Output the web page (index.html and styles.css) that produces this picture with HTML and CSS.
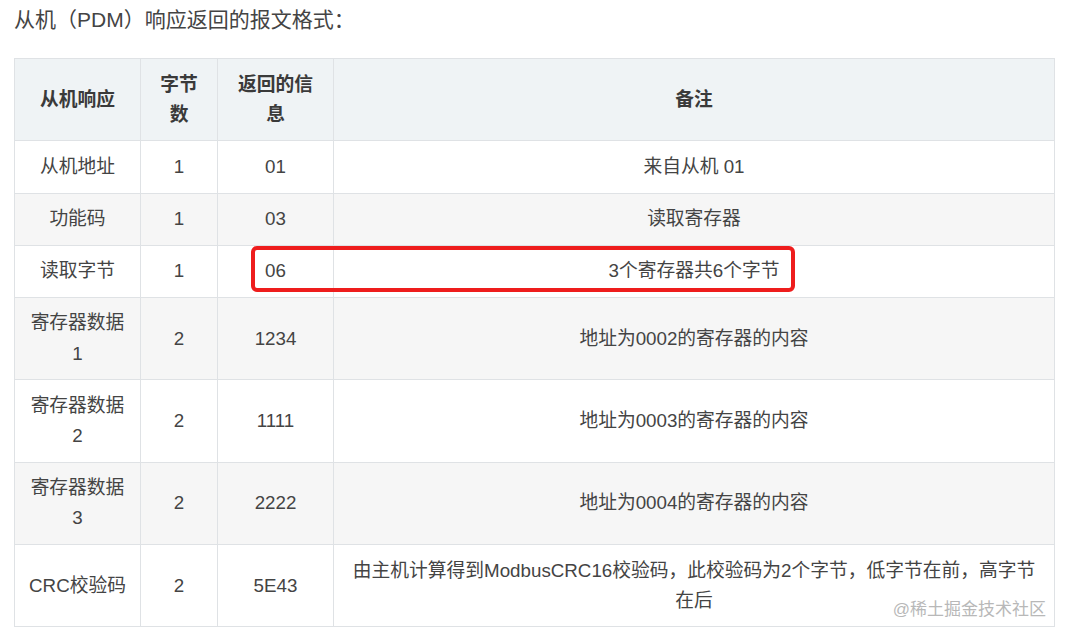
FILE: index.html
```html
<!DOCTYPE html>
<html lang="zh-CN">
<head>
  <meta charset="UTF-8" />
  <meta name="viewport" content="width=device-width, initial-scale=1.0"/>
  <title>从机响应报文格式</title>
  <link rel="stylesheet" href="styles.css">
</head>
<body>
  <p class="intro">从机（PDM）响应返回的报文格式：</p>

  <div class="frame">
    <table class="msg">
      <colgroup>
        <col class="c-name" />
        <col class="c-len" />
        <col class="c-val" />
        <col class="c-note" />
      </colgroup>
      <thead>
        <tr>
          <th>从机响应</th>
          <th>字节<br>数</th>
          <th>返回的信<br>息</th>
          <th>备注</th>
        </tr>
      </thead>
      <tbody>
        <tr>
          <td>从机地址</td>
          <td>1</td>
          <td>01</td>
          <td>来自从机 01</td>
        </tr>
        <tr>
          <td>功能码</td>
          <td>1</td>
          <td>03</td>
          <td>读取寄存器</td>
        </tr>
        <tr>
          <td>读取字节</td>
          <td>1</td>
          <td>06</td>
          <td>3个寄存器共6个字节</td>
        </tr>
        <tr>
          <td>寄存器数据<br>1</td>
          <td>2</td>
          <td>1234</td>
          <td>地址为0002的寄存器的内容</td>
        </tr>
        <tr>
          <td>寄存器数据<br>2</td>
          <td>2</td>
          <td>1111</td>
          <td>地址为0003的寄存器的内容</td>
        </tr>
        <tr>
          <td>寄存器数据<br>3</td>
          <td>2</td>
          <td>2222</td>
          <td>地址为0004的寄存器的内容</td>
        </tr>
        <tr>
          <td>CRC校验码</td>
          <td>2</td>
          <td>5E43</td>
          <td>由主机计算得到ModbusCRC16校验码，此校验码为2个字节，低字节在前，高字节<br>在后</td>
        </tr>
      </tbody>
    </table>

    <div class="mark"></div>
    <div class="watermark">@稀土掘金技术社区</div>
  </div>
</body>
</html>
```

FILE: styles.css
```css
body { margin: 0; padding: 0 13px 0 14px; background: #fff; color: #444; font-family: "Liberation Sans", "Noto Sans CJK SC", sans-serif; }
.intro { margin: 0 0 18px; font-size: 21px; line-height: 40px; color: #444; }

.frame { position: relative; width: 1041px; }
.msg { width: 100%; table-layout: fixed; border-collapse: collapse; font-size: 18.75px; line-height: 1.61; }
.c-name { width: 126px; }
.c-len { width: 77px; }
.c-val { width: 116px; }
.msg th, .msg td { border: 1px solid #dfe2e5; padding: 10.5px 12px; text-align: center; vertical-align: middle; }
.msg th { background: #eff3f5; font-weight: bold; color: #3a3a3a; }
.msg tbody tr:nth-child(even) { background: #f6f6f6; }

/* red highlight drawn over the 读取字节 row */
.mark { position: absolute; left: 237px; top: 188px; width: 544px; height: 46px; box-sizing: border-box; border: 4px solid #ee1d1d; border-radius: 6px; }

.watermark { position: absolute; right: 9px; bottom: 7px; font-size: 17px; line-height: 20px; color: #b8b8b8; }
```
